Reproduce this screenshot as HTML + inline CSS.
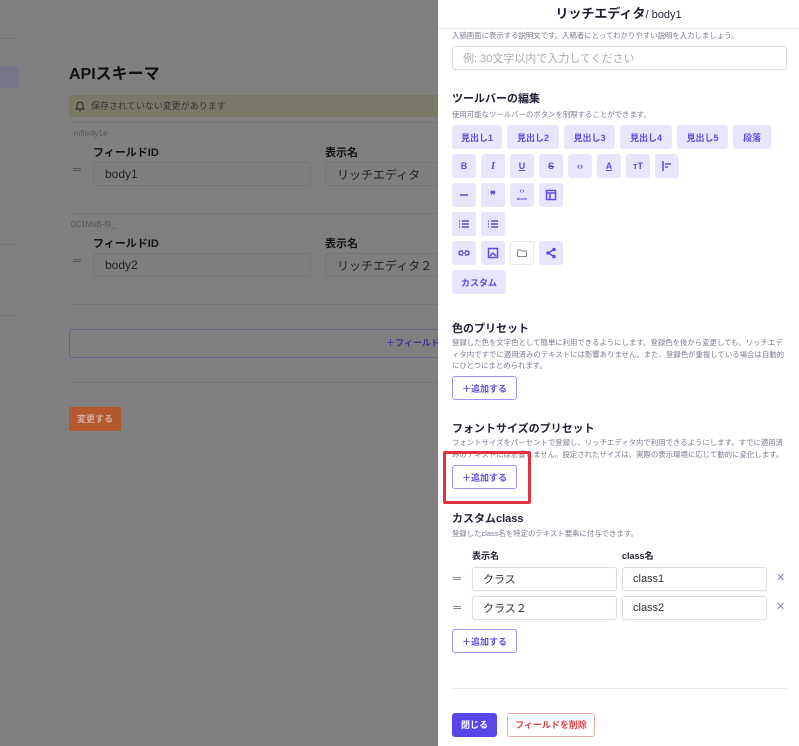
<!DOCTYPE html>
<html><head><meta charset="utf-8"><style>
*{box-sizing:border-box;margin:0;padding:0}
body{width:799px;height:746px;overflow:hidden;position:relative;background:#808080;font-family:"Liberation Sans","Noto Sans CJK JP",sans-serif;color:#111}
.a{position:absolute}
.lin{position:absolute;height:1px;background:#767676}
.inp{position:absolute;border:1px solid #767676;border-radius:3px;background:#7f7f7f;font-size:12px;color:#222;padding-left:11px;display:flex;align-items:center}
.lbl{position:absolute;font-size:11px;font-weight:bold;color:#111}
.sm{position:absolute;font-size:8px;color:#555}
.eq{position:absolute;width:8px;height:3px;border-top:1px solid #555;border-bottom:1px solid #555}
#p{position:absolute;left:438px;top:0;width:361px;height:746px;background:#fff;overflow:hidden}
#p .h{position:absolute;font-size:11px;font-weight:bold;color:#1f2133}
#p .d{position:absolute;font-size:7.4px;color:#7a7c90;line-height:11.5px;width:335px}
.tb{position:absolute;background:#e8e6fd;border-radius:3px;color:#5b4ee0;font-size:9px;font-weight:bold;display:flex;align-items:center;justify-content:center;width:24px;height:24px}
.tb svg{width:12px;height:12px;stroke:#5b4ee0;fill:none;stroke-width:1.5}
.ob{position:absolute;border:1px solid #9d94f5;border-radius:3px;color:#5b4ee0;font-size:9px;font-weight:bold;display:flex;align-items:center;justify-content:center;background:#fff}
.pi{position:absolute;border:1px solid #dcdce6;border-radius:3px;font-size:11px;color:#333;display:flex;align-items:center;padding-left:10px;box-shadow:0 1px 1px rgba(0,0,0,.04)}
#p .eq{border-color:#888}
</style></head><body>
<div class="lin" style="left:0;top:38px;width:19px"></div>
<div class="a" style="left:0;top:66px;width:19px;height:22px;background:#77778a;border-radius:0 3px 3px 0"></div>
<div class="lin" style="left:0;top:244px;width:19px"></div>
<div class="lin" style="left:0;top:315px;width:19px"></div>
<div class="a" style="left:69px;top:60px;font-size:16px;font-weight:bold;color:#111">APIスキーマ</div>
<div class="a" style="left:69px;top:95px;width:369px;height:22px;background:#7a7866;font-size:9px;color:#333;padding-left:22px;line-height:22px">保存されていない変更があります</div>
<svg class="a" style="left:75px;top:100px" width="10" height="12" viewBox="0 0 10 12" fill="none" stroke="#222" stroke-width="1"><path d="M2 8V5a3 3 0 016 0v3l1 1H1zM4 10.5h2"/></svg>
<div class="lin" style="left:69px;top:122px;width:369px"></div>
<div class="sm" style="left:71px;top:129px">-mfiix4y1e</div>
<div class="lbl" style="left:93px;top:144px">フィールドID</div>
<div class="lbl" style="left:325px;top:144px">表示名</div>
<div class="eq" style="left:73px;top:168px"></div>
<div class="inp" style="left:93px;top:162px;width:218px;height:24px">body1</div>
<div class="inp" style="left:325px;top:162px;width:120px;height:24px">リッチエディタ</div>
<div class="lin" style="left:69px;top:213px;width:369px"></div>
<div class="sm" style="left:71px;top:220px">0C1MsB-f9_</div>
<div class="lbl" style="left:93px;top:235px">フィールドID</div>
<div class="lbl" style="left:325px;top:235px">表示名</div>
<div class="eq" style="left:73px;top:259px"></div>
<div class="inp" style="left:93px;top:253px;width:218px;height:24px">body2</div>
<div class="inp" style="left:325px;top:253px;width:120px;height:24px">リッチエディタ２</div>
<div class="lin" style="left:69px;top:304px;width:369px"></div>
<div class="a" style="left:69px;top:329px;width:380px;height:29px;border:1px solid #6a6590;border-radius:3px;font-size:9px;font-weight:bold;color:#3e3590;padding-left:316px;line-height:27px">＋フィールド</div>
<div class="lin" style="left:69px;top:382px;width:369px"></div>
<div class="a" style="left:69px;top:407px;width:52px;height:24px;background:#b3582f;border-radius:2px;font-size:9px;font-weight:bold;color:#d6b0a0;text-align:center;line-height:24px">変更する</div>

<div id="p">
<div class="a" style="left:0;top:0;width:361px;height:29px;border-bottom:1px solid #e6e6ec;text-align:center;line-height:28px;font-size:13px;font-weight:bold;color:#1f2133">リッチエディタ<span style="font-weight:normal;font-size:11px">/ body1</span></div>
<div class="d" style="left:14px;top:30px">入稿画面に表示する説明文です。入稿者にとってわかりやすい説明を入力しましょう。</div>
<div class="pi" style="left:14px;top:46px;width:335px;height:24px;color:#aaa;font-size:11px">例: 30文字以内で入力してください</div>
<div class="h" style="left:14px;top:90px">ツールバーの編集</div>
<div class="d" style="left:14px;top:109px">使用可能なツールバーのボタンを制限することができます。</div>
<div class="tb" style="left:14px;top:125px;width:50px">見出し1</div>
<div class="tb" style="left:69px;top:125px;width:52px">見出し2</div>
<div class="tb" style="left:126px;top:125px;width:51px">見出し3</div>
<div class="tb" style="left:182px;top:125px;width:52px">見出し4</div>
<div class="tb" style="left:239px;top:125px;width:51px">見出し5</div>
<div class="tb" style="left:295px;top:125px;width:38px">段落</div>
<div class="tb" style="left:14px;top:154px">B</div>
<div class="tb" style="left:43px;top:154px;font-style:italic;font-family:'Liberation Serif',serif;font-size:11px">I</div>
<div class="tb" style="left:72px;top:154px;text-decoration:underline">U</div>
<div class="tb" style="left:101px;top:154px;text-decoration:line-through">S</div>
<div class="tb" style="left:130px;top:154px">‹›</div>
<div class="tb" style="left:159px;top:154px;text-decoration:underline">A</div>
<div class="tb" style="left:188px;top:154px">ᴛT</div>
<div class="tb" style="left:217px;top:154px"><svg viewBox="0 0 12 12"><path d="M2 1v10M4 4h6M4 7h3"/></svg></div>
<div class="tb" style="left:14px;top:183px"><svg viewBox="0 0 12 12"><path d="M2 6h8"/></svg></div>
<div class="tb" style="left:43px;top:183px;font-size:11px">❞</div>
<div class="tb" style="left:72px;top:183px;font-size:7px;line-height:7px;flex-direction:column">‹›<span style="font-size:4px">block</span></div>
<div class="tb" style="left:101px;top:183px"><svg viewBox="0 0 12 12"><rect x="1.5" y="1.5" width="9" height="9"/><path d="M1.5 4h9M5 4v6.5"/></svg></div>
<div class="tb" style="left:14px;top:212px"><svg viewBox="0 0 12 12"><path d="M1 3h1M4 3h7M1 6h1M4 6h7M1 9h1M4 9h7"/></svg></div>
<div class="tb" style="left:43px;top:212px"><svg viewBox="0 0 12 12"><path d="M1 3h1M4 3h7M1 6h1M4 6h7M1 9h1M4 9h7"/></svg></div>
<div class="tb" style="left:14px;top:241px"><svg viewBox="0 0 12 12"><path d="M5 4H3a2 2 0 000 4h2M7 4h2a2 2 0 010 4H7M4 6h4"/></svg></div>
<div class="tb" style="left:43px;top:241px"><svg viewBox="0 0 12 12"><rect x="1.5" y="1.5" width="9" height="9"/><path d="M3 9l3-3 3 3"/></svg></div>
<div class="tb" style="left:72px;top:241px;background:#fff;border:1px solid #e6e6ec"><svg viewBox="0 0 12 12" style="stroke:#888;stroke-width:1"><path d="M1.5 3h3.5l1 1h4.5v5.5h-9z"/></svg></div>
<div class="tb" style="left:101px;top:241px"><svg viewBox="0 0 12 12"><circle cx="3" cy="6" r="1"/><circle cx="9" cy="2.5" r="1"/><circle cx="9" cy="9.5" r="1"/><path d="M3 6l6-3.5M3 6l6 3.5"/></svg></div>
<div class="tb" style="left:14px;top:270px;width:54px">カスタム</div>

<div class="h" style="left:14px;top:320px">色のプリセット</div>
<div class="d" style="left:14px;top:337px">登録した色を文字色として簡単に利用できるようにします。登録色を後から変更しても、リッチエディタ内ですでに適用済みのテキストには影響ありません。また、登録色が重複している場合は自動的にひとつにまとめられます。</div>
<div class="ob" style="left:14px;top:376px;width:65px;height:24px">＋追加する</div>
<div class="h" style="left:14px;top:420px">フォントサイズのプリセット</div>
<div class="d" style="left:14px;top:437px">フォントサイズをパーセントで登録し、リッチエディタ内で利用できるようにします。すでに適用済みのテキストには影響しません。設定されたサイズは、実際の表示環境に応じて動的に変化します。</div>
<div class="ob" style="left:14px;top:465px;width:65px;height:24px">＋追加する</div>
<div class="a" style="left:5px;top:451px;width:88px;height:53px;border:3px solid #e2323f;border-radius:2px"></div>
<div class="h" style="left:14px;top:510px">カスタムclass</div>
<div class="d" style="left:14px;top:528px">登録したclass名を特定のテキスト要素に付与できます。</div>
<div class="h" style="left:34px;top:549px;font-size:9px">表示名</div>
<div class="h" style="left:184px;top:549px;font-size:9px">class名</div>
<div class="eq" style="left:15px;top:577px"></div>
<div class="pi" style="left:34px;top:567px;width:145px;height:24px">クラス</div>
<div class="pi" style="left:184px;top:567px;width:145px;height:24px">class1</div>
<div class="a" style="left:338px;top:571px;font-size:11px;color:#8a8ab0">✕</div>
<div class="eq" style="left:15px;top:606px"></div>
<div class="pi" style="left:34px;top:596px;width:145px;height:24px">クラス２</div>
<div class="pi" style="left:184px;top:596px;width:145px;height:24px">class2</div>
<div class="a" style="left:338px;top:600px;font-size:11px;color:#8a8ab0">✕</div>
<div class="ob" style="left:14px;top:629px;width:65px;height:24px">＋追加する</div>
<div class="a" style="left:14px;top:688px;width:335px;height:1px;background:#ececf0"></div>
<div class="a" style="left:14px;top:713px;width:45px;height:24px;background:#5846ec;border-radius:3px;color:#fff;font-size:9px;font-weight:bold;text-align:center;line-height:24px">閉じる</div>
<div class="a" style="left:69px;top:713px;width:88px;height:24px;border:1px solid #f0a8ae;border-radius:3px;color:#e0404d;font-size:9px;font-weight:bold;text-align:center;line-height:22px">フィールドを削除</div>
</div>
</body></html>
